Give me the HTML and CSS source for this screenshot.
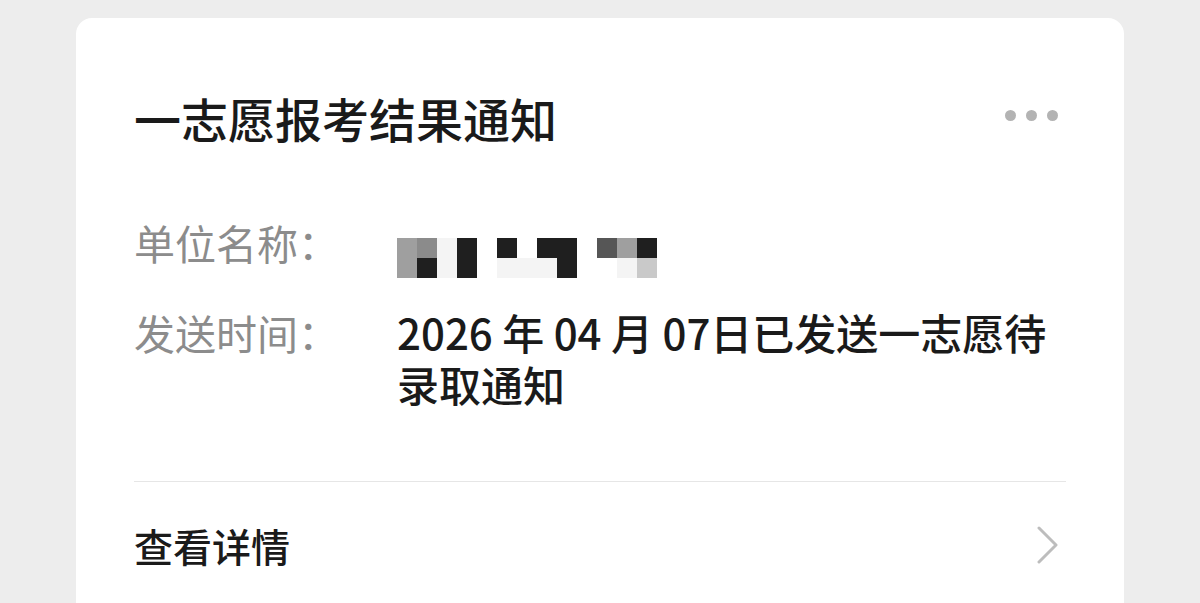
FILE: index.html
```html
<!DOCTYPE html>
<html lang="zh-CN">
<head>
  <meta charset="UTF-8" />
  <meta name="viewport" content="width=device-width, initial-scale=1.0">
  <title>一志愿报考结果通知</title>
  <link rel="stylesheet" href="styles.css">
</head>
<body>

  <div class="card">
    <div class="card-head">
      <h2>一志愿报考结果通知</h2>
      <div class="more">
        <span class="dot"></span>
        <span class="dot"></span>
        <span class="dot"></span>
      </div>
    </div>

    <div class="info">
      <div class="row">
        <div class="label">单位名称：</div>
        <div class="value">
          <!-- name is blurred in the source -->
          <div class="mosaic">
            <i class="s3"></i><i class="s4"></i><i class="s1"></i><i class="s6"></i><i></i><i class="s6"></i><i></i><i class="s6"></i><i class="s6"></i><i></i><i class="s5"></i><i class="s3"></i><i class="s6"></i>
            <i class="s3"></i><i class="s6"></i><i class="s1"></i><i class="s6"></i><i></i><i class="s1"></i><i class="s1"></i><i class="s1"></i><i class="s6"></i><i></i><i></i><i class="s1"></i><i class="s2"></i>
          </div>
        </div>
      </div>
      <div class="row">
        <div class="label">发送时间：</div>
        <div class="value">2026 年 04 月 07日已发送一志愿待录取通知</div>
      </div>
    </div>

    <div class="footer">
      <span>查看详情</span>
      <svg class="arrow" width="24" height="40" viewBox="0 0 24 40">
        <polyline points="3,2 20,19 3,36" fill="none" stroke="#bdbdbd" stroke-width="3" stroke-linecap="round" stroke-linejoin="round"/>
      </svg>
    </div>
  </div>

</body>
</html>
```

FILE: styles.css
```css
body {
  margin: 0;
  background: #ededed;
  font-family: "Noto Sans CJK SC", "Noto Sans", sans-serif;
  color: #1a1a1a;
}

.card {
  margin: 18px 0 0 76px;
  width: 1048px;
  box-sizing: border-box;
  background: #fff;
  border-radius: 16px;
  padding: 72px 58px 60px;
}

.card-head {
  display: flex;
  align-items: center;
  justify-content: space-between;
  height: 56px;
}

h2 {
  margin: 0;
  font-size: 47px;
  font-weight: 500;
  line-height: 56px;
  color: #1a1a1a;
}

.more {
  display: flex;
  gap: 10px;
  padding-right: 8px;
  margin-top: -6px;
}

.dot {
  width: 11px;
  height: 11px;
  border-radius: 50%;
  background: #b3b3b3;
}

.info {
  margin-top: 70px;
  display: flex;
  flex-direction: column;
  gap: 38px;
}

.row {
  display: flex;
  font-size: 41px;
  line-height: 52px;
}

.label {
  width: 263px;
  flex: none;
  color: #8c8c8c;
}

.value {
  flex: 1;
  font-size: 42px;
  font-weight: 500;
  color: #1a1a1a;
}

.mosaic {
  display: grid;
  grid-template-columns: repeat(13, 20px);
  grid-auto-rows: 20px;
  margin: 22px 0 -10px;
  height: 40px;
}

.mosaic i { background: #fff; }
.mosaic .s1 { background: #f4f4f4; }
.mosaic .s2 { background: #c9c9c9; }
.mosaic .s3 { background: #9f9f9f; }
.mosaic .s4 { background: #8b8b8b; }
.mosaic .s5 { background: #565656; }
.mosaic .s6 { background: #1f1f1f; }

.footer {
  margin-top: 71px;
  border-top: 1px solid #e6e6e6;
  padding-top: 37px;
  display: flex;
  align-items: center;
  justify-content: space-between;
  font-size: 39px;
  font-weight: 500;
  line-height: 52px;
}

.arrow {
  margin-right: 6px;
  margin-top: 2px;
}
```
